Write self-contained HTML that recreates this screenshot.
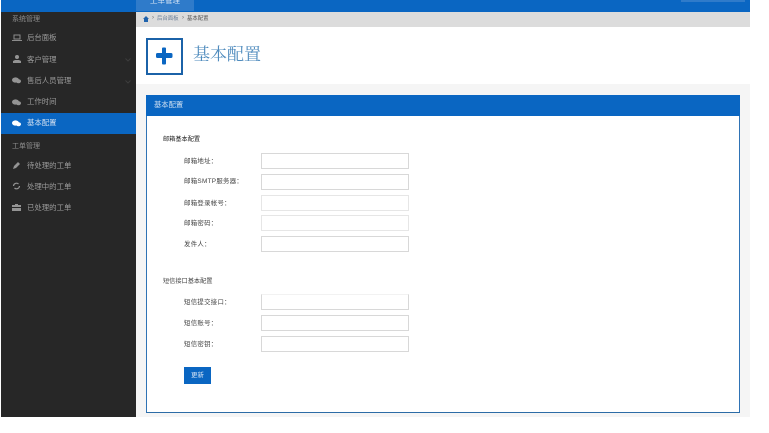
<!DOCTYPE html>
<html>
<head>
<meta charset="utf-8">
<style>
html,body{margin:0;padding:0;background:#fff}
body{width:769px;height:433px;overflow:hidden;position:relative;font-family:"Liberation Sans","Noto Sans CJK SC",sans-serif}
.a{position:absolute;white-space:nowrap}
.nav{font-size:7.4px;line-height:12px;color:#9c9c9c;left:27px;filter:blur(.3px)}
.grp{font-size:7px;line-height:10px;color:#8e8e8e;left:12px;filter:blur(.3px)}
.lab{font-size:6.4px;line-height:12px;color:#444;left:184px;letter-spacing:.3px;filter:blur(.2px)}
.inp{position:absolute;left:261px;width:146px;height:14px;border:1px solid #d8d8d8;background:#fff}
.h{font-size:6.2px;line-height:12px;color:#222;left:163px;filter:blur(.15px)}
svg{position:absolute}
</style>
</head>
<body>
<!-- top bar -->
<div class="a" style="left:1px;top:0;width:749px;height:12px;background:#0a66c2"></div>
<div class="a" style="left:136px;top:0;width:58px;height:11px;background:#2f7bca"></div>
<div class="a" style="left:150px;top:-5px;font-size:7.500px;line-height:12px;color:#d8e6f5">工单管理</div>
<div class="a" style="left:681px;top:0;width:64px;height:2px;background:#2f7bca"></div>

<!-- sidebar -->
<div class="a" style="left:1px;top:12px;width:135px;height:405px;background:#272727"></div>
<div class="a grp" style="top:15px">系统管理</div>
<div class="a" style="left:1px;top:113px;width:135px;height:21px;background:#0a66c2"></div>

<svg style="left:12px;top:34px" width="10" height="8" viewBox="0 0 10 8"><path d="M2 1h6v4H2z" fill="none" stroke="#8c8c8c"/><path d="M0 6.500h10" stroke="#8c8c8c"/></svg>
<div class="a nav" style="top:32px">后台面板</div>
<svg style="left:13px;top:55px" width="8" height="8" viewBox="0 0 8 8"><circle cx="4" cy="2" r="2" fill="#949494"/><path d="M0 8V6l2-1h4l2 1v2z" fill="#949494"/></svg>
<div class="a nav" style="top:54px">客户管理</div>
<svg style="left:125px;top:58px" width="6" height="4" viewBox="0 0 6 4"><path d="M.5.500L3 3 5.500.500" fill="none" stroke="#3d3d3d"/></svg>
<svg style="left:12px;top:77px" width="9" height="7" viewBox="0 0 9 7"><ellipse cx="3.500" cy="3" rx="3.500" ry="2.600" fill="#949494"/><ellipse cx="6.500" cy="4.200" rx="2.500" ry="2" fill="#949494"/></svg>
<div class="a nav" style="top:75px">售后人员管理</div>
<svg style="left:125px;top:80px" width="6" height="4" viewBox="0 0 6 4"><path d="M.5.500L3 3 5.500.500" fill="none" stroke="#3d3d3d"/></svg>
<svg style="left:12px;top:99px" width="9" height="7" viewBox="0 0 9 7"><ellipse cx="3.500" cy="3" rx="3.500" ry="2.600" fill="#949494"/><ellipse cx="6.500" cy="4.200" rx="2.500" ry="2" fill="#949494"/></svg>
<div class="a nav" style="top:96px">工作时间</div>
<svg style="left:12px;top:120px" width="9" height="7" viewBox="0 0 9 7"><ellipse cx="3.500" cy="3" rx="3.500" ry="2.600" fill="#fff"/><ellipse cx="6.500" cy="4.200" rx="2.500" ry="2" fill="#fff"/></svg>
<div class="a nav" style="top:117px;color:#d5e2f2">基本配置</div>

<div class="a grp" style="top:142px">工单管理</div>
<svg style="left:13px;top:161px" width="8" height="8" viewBox="0 0 8 8"><path d="M0 8l1-3 4-4 2 2-4 4z" fill="#949494"/></svg>
<div class="a nav" style="top:160px">待处理的工单</div>
<svg style="left:12px;top:182px" width="9" height="8" viewBox="0 0 9 8"><path d="M1.500 4a3 3 0 0 1 5-2M7.500 4a3 3 0 0 1-5 2" fill="none" stroke="#949494" stroke-width="1.200"/></svg>
<div class="a nav" style="top:181px">处理中的工单</div>
<svg style="left:12px;top:203px" width="9" height="8" viewBox="0 0 9 8"><path d="M3 2V1h3v1h3v2H0V2zM0 5h9v3H0z" fill="#949494"/></svg>
<div class="a nav" style="top:202px">已处理的工单</div>

<!-- breadcrumb -->
<div class="a" style="left:136px;top:12px;width:614px;height:15px;background:#dcdcdc"></div>
<svg style="left:143px;top:16px" width="6" height="6" viewBox="0 0 6 6"><path d="M3 0L0 3h1v3h4V3h1z" fill="#1f63ad"/></svg>
<div class="a" style="left:152px;top:12px;font-size:6px;line-height:12px;color:#666">›</div>
<div class="a" style="left:157px;top:13px;font-size:5.400px;line-height:12px;color:#6b7f99">后台面板</div>
<div class="a" style="left:182px;top:12px;font-size:6px;line-height:12px;color:#666">›</div>
<div class="a" style="left:187px;top:13px;font-size:5.400px;line-height:12px;color:#555">基本配置</div>

<!-- content background -->
<div class="a" style="left:136px;top:84px;width:614px;height:333px;background:#f5f5f5"></div>

<!-- page title -->
<div class="a" style="left:146px;top:38px;width:33px;height:33px;border:2px solid #1b62a8;background:#fff"></div>
<svg style="left:155px;top:47px" width="19" height="19" viewBox="0 0 19 19"><path d="M7 1.500a1 1 0 0 1 1-1h2a1 1 0 0 1 1 1V6h5a1.500 1.500 0 0 1 1.500 1.500v2a1.500 1.500 0 0 1-1.500 1.500h-5v5.500a1 1 0 0 1-1 1H8a1 1 0 0 1-1-1V11H2.500A1.500 1.500 0 0 1 1 9.500v-2A1.500 1.500 0 0 1 2.500 6H7z" fill="#0a66c2"/></svg>
<div class="a" style="left:193px;top:44px;font-family:'Liberation Serif','Noto Serif CJK SC',serif;font-size:17px;line-height:22px;color:#4f8bbd">基本配置</div>

<!-- panel -->
<div class="a" style="left:146px;top:95px;width:592px;height:316px;background:#fff;border:1px solid #2f73b5;border-bottom:1px solid #2c6ca6"></div>
<div class="a" style="left:146px;top:95px;width:594px;height:21px;background:#0a66c2"></div>
<div class="a" style="left:154px;top:99px;font-size:7.300px;line-height:12px;color:#cfe0f2;filter:blur(.25px)">基本配置</div>

<div class="a h" style="top:134px">邮箱基本配置</div>
<div class="a lab" style="top:156px">邮箱地址：</div>
<div class="inp" style="top:153px"></div>
<div class="a lab" style="top:176px">邮箱SMTP服务器：</div>
<div class="inp" style="top:174px"></div>
<div class="a lab" style="top:198px">邮箱登录帐号：</div>
<div class="inp" style="top:195px;border-color:#e6e6e6"></div>
<div class="a lab" style="top:218px">邮箱密码：</div>
<div class="inp" style="top:215px;border-color:#e6e6e6"></div>
<div class="a lab" style="top:239px">发件人：</div>
<div class="inp" style="top:236px"></div>

<div class="a h" style="left:163px;top:276px;color:#444">短信接口基本配置</div>
<div class="a lab" style="top:297px">短信提交接口：</div>
<div class="inp" style="top:294px;border-top-color:#f2f2f2"></div>
<div class="a lab" style="top:318px">短信账号：</div>
<div class="inp" style="top:315px"></div>
<div class="a lab" style="top:339px">短信密钥：</div>
<div class="inp" style="top:336px"></div>

<div class="a" style="left:184px;top:367px;width:27px;height:17px;background:#0a66c2;color:#d5e4f5;font-size:6.500px;line-height:17px;text-align:center">更新</div>
</body>
</html>
